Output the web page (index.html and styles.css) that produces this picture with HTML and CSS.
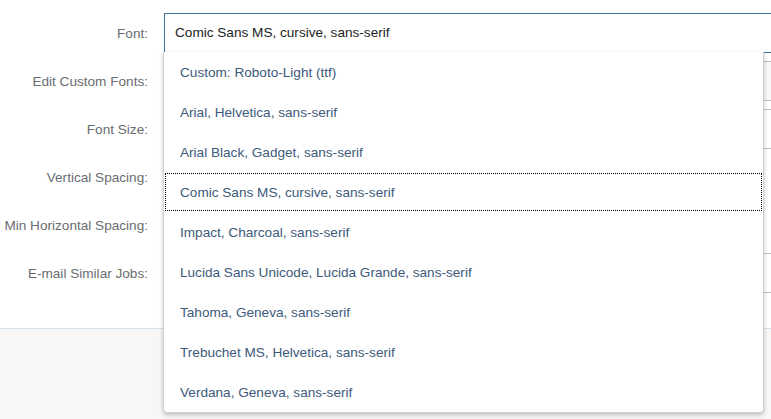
FILE: index.html
```html
<!DOCTYPE html>
<html>
<head>
<meta charset="utf-8">
<link rel="stylesheet" href="styles.css">
</head>
<body>
<div class="page">
  <div class="form">
    <div class="row">
      <label class="lbl">Font:</label>
      <div class="ctl"><div class="select">Comic Sans MS, cursive, sans-serif</div></div>
    </div>
    <div class="row">
      <label class="lbl">Edit Custom Fonts:</label>
      <div class="ctl"><button class="btn">Manage Fonts</button></div>
    </div>
    <div class="row">
      <label class="lbl">Font Size:</label>
      <div class="ctl"><div class="field"></div></div>
    </div>
    <div class="row">
      <label class="lbl">Vertical Spacing:</label>
      <div class="ctl"></div>
    </div>
    <div class="row">
      <label class="lbl">Min Horizontal Spacing:</label>
      <div class="ctl"></div>
    </div>
    <div class="row">
      <label class="lbl">E-mail Similar Jobs:</label>
      <div class="ctl"><div class="field"></div></div>
    </div>
  </div>
  <div class="footer"></div>

  <ul class="dropdown">
    <li class="opt">Custom: Roboto-Light (ttf)</li>
    <li class="opt">Arial, Helvetica, sans-serif</li>
    <li class="opt">Arial Black, Gadget, sans-serif</li>
    <li class="opt focused">Comic Sans MS, cursive, sans-serif</li>
    <li class="opt">Impact, Charcoal, sans-serif</li>
    <li class="opt">Lucida Sans Unicode, Lucida Grande, sans-serif</li>
    <li class="opt">Tahoma, Geneva, sans-serif</li>
    <li class="opt">Trebuchet MS, Helvetica, sans-serif</li>
    <li class="opt">Verdana, Geneva, sans-serif</li>
  </ul>
</div>
</body>
</html>
```
FILE: styles.css
```css
html, body {
  margin: 0;
  padding: 0;
  width: 771px;
  height: 419px;
  overflow: hidden;
  background: #f7f7f7;
  font-family: "Liberation Sans", Arial, sans-serif;
  font-size: 13.6px;
}
.page {
  position: relative;
  height: 419px;
}
.form {
  background: #fff;
  padding: 9px 0 31px;
  border-bottom: 1px solid #d3e0ec;
}
.row {
  display: flex;
  align-items: center;
  height: 48px;
}
.lbl {
  width: 148px;
  text-align: right;
  color: #6a6d70;
  flex: none;
}
.ctl {
  margin-left: 16px;
  flex: none;
  width: 640px;
}
.select {
  box-sizing: border-box;
  height: 40px;
  border: 1px solid #3e6f99;
  padding: 0 10px;
  line-height: 38px;
  color: #1d1d1d;
}
.btn {
  margin-left: 596px;
  height: 40px;
  border: 1px solid #bfbfbf;
  background: #f7f7f7;
  color: #0a6ed1;
  font: inherit;
  padding: 0 10px;
}
.field {
  margin-left: 600px;
  box-sizing: border-box;
  height: 40px;
  border-top: 1px solid #bfbfbf;
  border-bottom: 1px solid #bfbfbf;
}
.dropdown {
  position: absolute;
  left: 163px;
  top: 52px;
  width: 601px;
  box-sizing: border-box;
  margin: 0;
  padding: 0;
  list-style: none;
  background: #fff;
  border: 1px solid #d0d0d0;
  border-top: none;
  border-radius: 0 0 4px 4px;
  box-shadow: 0 2px 4px rgba(0, 0, 0, 0.22);
}
.opt {
  height: 40px;
  line-height: 42px;
  overflow: hidden;
  padding-left: 16px;
  color: #3d5a7a;
  box-sizing: border-box;
}
.opt.focused {
  outline: 1px dotted #000;
  outline-offset: -2px;
}
```
